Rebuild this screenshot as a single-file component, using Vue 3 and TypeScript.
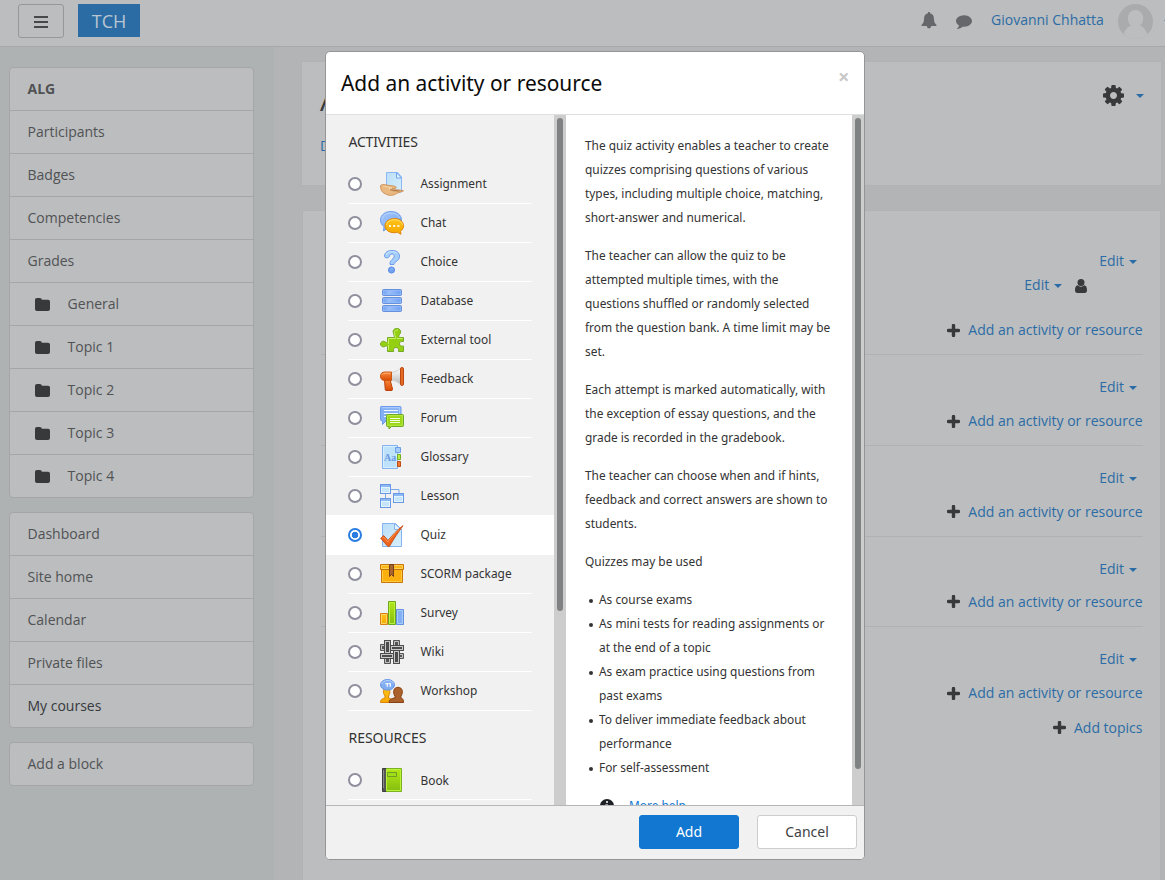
<script setup lang="ts">
import { ref } from 'vue'

interface NavItem { label: string; bold?: boolean; dark?: boolean; folder?: boolean }
interface Option { id: string; label: string }

const navBlocks: NavItem[][] = [
  [
    { label: 'ALG', bold: true },
    { label: 'Participants' },
    { label: 'Badges' },
    { label: 'Competencies' },
    { label: 'Grades' },
    { label: 'General', folder: true },
    { label: 'Topic 1', folder: true },
    { label: 'Topic 2', folder: true },
    { label: 'Topic 3', folder: true },
    { label: 'Topic 4', folder: true },
  ],
  [
    { label: 'Dashboard' },
    { label: 'Site home' },
    { label: 'Calendar' },
    { label: 'Private files' },
    { label: 'My courses', dark: true },
  ],
  [{ label: 'Add a block' }],
]

const activities: Option[] = [
  { id: 'assign', label: 'Assignment' },
  { id: 'chat', label: 'Chat' },
  { id: 'choice', label: 'Choice' },
  { id: 'data', label: 'Database' },
  { id: 'lti', label: 'External tool' },
  { id: 'feedback', label: 'Feedback' },
  { id: 'forum', label: 'Forum' },
  { id: 'glossary', label: 'Glossary' },
  { id: 'lesson', label: 'Lesson' },
  { id: 'quiz', label: 'Quiz' },
  { id: 'scorm', label: 'SCORM package' },
  { id: 'survey', label: 'Survey' },
  { id: 'wiki', label: 'Wiki' },
  { id: 'workshop', label: 'Workshop' },
]
const resources: Option[] = [{ id: 'book', label: 'Book' }]
const groups = [
  { title: 'ACTIVITIES', items: activities },
  { title: 'RESOURCES', items: resources },
]

const selected = ref('quiz')
const sections = [1, 2, 3, 4, 5]

const paragraphs: string[][] = [
  ['The quiz activity enables a teacher to create', 'quizzes comprising questions of various', 'types, including multiple choice, matching,', 'short-answer and numerical.'],
  ['The teacher can allow the quiz to be', 'attempted multiple times, with the', 'questions shuffled or randomly selected', 'from the question bank. A time limit may be', 'set.'],
  ['Each attempt is marked automatically, with', 'the exception of essay questions, and the', 'grade is recorded in the gradebook.'],
  ['The teacher can choose when and if hints,', 'feedback and correct answers are shown to', 'students.'],
  ['Quizzes may be used'],
]
const uses: string[][] = [
  ['As course exams'],
  ['As mini tests for reading assignments or', 'at the end of a topic'],
  ['As exam practice using questions from', 'past exams'],
  ['To deliver immediate feedback about', 'performance'],
  ['For self-assessment'],
]
</script>

<template>
  <div class="page">
    <header class="topbar">
      <button class="menu-btn" aria-label="Menu">
        <svg width="14" height="12" viewBox="0 0 14 12"><path d="M0 1h14M0 6h14M0 11h14" stroke="#46484a" stroke-width="2" /></svg>
      </button>
      <span class="brand">TCH</span>
      <div class="user-tools">
        <svg class="bell" width="16" height="17" viewBox="0 0 16 17"><path fill="#65676a" d="M8 0c.8 0 1.200.5 1.100 1.300 2.500.6 3.800 2.500 3.800 5 0 3.600 1 5.300 2.500 6.500.4.600.1 1.200-.5 1.200h-4.800c0 1.400-.9 2.300-2.100 2.300s-2.100-.9-2.100-2.300H1.100c-.6 0-.9-.6-.5-1.200C2.100 11.600 3.100 9.900 3.100 6.300c0-2.500 1.300-4.400 3.800-5C6.800.5 7.200 0 8 0z" /></svg>
        <svg class="bubble" width="16" height="16" viewBox="0 0 1792 1792"><path fill="#65676a" d="M1792 896q0 174-120 321.500t-326 233-450 85.500q-70 0-145-8-198 175-460 242-49 14-114 22-17 2-30.500-9t-17.500-29v-1q-3-4-.5-12t2-10 4.500-9.500l6-9 7-8.500 8-9q7-8 31-34.500t34.500-38 31-39.500 32.500-51 27-59 26-76q-157-89-247.500-220t-90.500-281q0-130 71-248.500t191-204.500 286-136.500 348-50.500q244 0 450 85.500t326 233 120 321.500z" /></svg>
        <a class="user-name">Giovanni Chhatta</a>
        <svg class="avatar" width="35" height="35" viewBox="0 0 35 35">
          <clipPath id="avatarClip"><circle cx="17.500" cy="17.500" r="17.500" /></clipPath>
          <g clip-path="url(#avatarClip)">
            <rect width="35" height="35" fill="#a9abad" />
            <ellipse cx="17.500" cy="14.500" rx="7.800" ry="8.500" fill="#bbbdbf" />
            <path d="M5 35c0-8 5-13 9-14h7c4 1 9 6 9 14z" fill="#bbbdbf" />
          </g>
        </svg>
        <i class="caret"></i>
      </div>
    </header>

    <div class="columns">
      <aside class="drawer">
        <nav v-for="(block, b) in navBlocks" :key="b" class="nav-block">
          <a v-for="item in block" :key="item.label" class="nav-item" :class="{ bold: item.bold, dark: item.dark, sub: item.folder }">
            <svg v-if="item.folder" class="folder" width="15" height="13" viewBox="0 0 15 13"><path fill="#37393b" d="M2 0h2.800C6 0 6.800.8 6.800 1.800h6.200c1.200 0 2 .8 2 2V11c0 1.200-.8 2-2 2H2c-1.200 0-2-.8-2-2V2C0 .8.800 0 2 0z" /></svg>
            <span>{{ item.label }}</span>
          </a>
        </nav>
      </aside>

      <main class="content">
        <section class="card heading-card">
          <div>
            <h1>ALG</h1>
            <a class="crumb">Dashboard</a>
          </div>
          <div class="settings">
            <svg width="21" height="21" viewBox="0 0 1536 1536"><path fill="#37393b" d="M1024 768q0-106-75-181t-181-75-181 75-75 181 75 181 181 75 181-75 75-181zm512-109v222q0 12-8 23t-20 13l-185 28q-19 54-39 91 35 50 107 138 10 12 10 25t-9 23q-27 37-99 108t-94 71q-12 0-26-9l-138-108q-44 23-91 38-16 136-29 186-7 28-36 28h-222q-14 0-24.500-8.500t-11.500-21.500l-28-184q-49-16-90-37l-141 107q-10 9-25 9-14 0-25-11-126-114-165-168-7-10-7-23 0-12 8-23 15-21 51-66.500t54-70.500q-27-50-41-99l-183-27q-13-2-21-12.500t-8-23.500v-222q0-12 8-23t19-13l186-28q14-46 39-92-40-57-107-138-10-12-10-24 0-10 9-23 26-36 98.500-107.500t94.500-71.500q13 0 26 10l138 107q44-23 91-38 16-136 29-186 7-28 36-28h222q14 0 24.500 8.500t11.500 21.500l28 184q49 16 90 37l142-107q9-9 24-9 13 0 25 10 129 119 165 170 7 8 7 22 0 12-8 23-15 21-51 66.500t-54 70.500q26 50 41 98l183 28q13 2 21 12.500t8 23.500z" /></svg>
            <i class="caret"></i>
          </div>
        </section>

        <section class="card topics">
          <div v-for="n in sections" :key="n" class="topic" :class="{ first: n === 1, tight: n === 4, last: n === 5 }">
            <div class="edit"><a>Edit</a><i class="caret"></i></div>
            <div v-if="n === 1" class="edit inner">
              <a>Edit</a><i class="caret"></i>
              <svg class="person" width="12" height="14" viewBox="0 0 12 14"><circle cx="6" cy="3.500" r="3.500" fill="#37393b" /><path fill="#37393b" d="M2.700 6.300C3.600 7.200 4.700 7.700 6 7.700s2.400-.5 3.300-1.400C11.200 6.600 12 8.600 12 11.300 12 13 11 14 9.800 14H2.200C1 14 0 13 0 11.300 0 8.600.8 6.600 2.700 6.300z" /></svg>
            </div>
            <div class="add">
              <svg width="13" height="13" viewBox="0 0 13 13"><path d="M6.500 1.500v10M1.500 6.500h10" stroke="#37393b" stroke-width="3.400" stroke-linecap="round" /></svg>
              <a>Add an activity or resource</a>
            </div>
          </div>
          <div class="add topics-add">
            <svg width="13" height="13" viewBox="0 0 13 13"><path d="M6.500 1.500v10M1.500 6.500h10" stroke="#37393b" stroke-width="3.400" stroke-linecap="round" /></svg>
            <a>Add topics</a>
          </div>
        </section>
      </main>
    </div>

    <div class="dialog" role="dialog">
      <div class="dialog-head">
        <h2>Add an activity or resource</h2>
        <span class="close">×</span>
      </div>
      <div class="dialog-body">
        <div class="chooser">
          <div v-for="g in groups" :key="g.title" class="group">
            <h3>{{ g.title }}</h3>
            <div v-for="o in g.items" :key="o.id" class="option" :class="{ selected: selected === o.id }" @click="selected = o.id">
              <div class="option-inner">
                <span class="radio"></span>
                <svg class="icon" width="24" height="24" viewBox="0 0 24 24">
                  <defs v-if="o.id === 'assign'">
                    <linearGradient id="gOrange" x1="0" y1="0" x2="0" y2="1"><stop offset="0" stop-color="#ffc31a" /><stop offset="1" stop-color="#f5a800" /></linearGradient>
                    <linearGradient id="gGreen" x1="0" y1="0" x2="0" y2="1"><stop offset="0" stop-color="#b4e916" /><stop offset="1" stop-color="#84bd10" /></linearGradient>
                    <linearGradient id="gBlue" x1="0" y1="0" x2="1" y2="1"><stop offset="0" stop-color="#a9cafa" /><stop offset="1" stop-color="#6b9ff0" /></linearGradient>
                    <linearGradient id="gDisk" x1="0" y1="0" x2="1" y2="0"><stop offset="0" stop-color="#6f9ff0" /><stop offset=".35" stop-color="#98bffa" /><stop offset="1" stop-color="#6f9ff0" /></linearGradient>
                    <linearGradient id="gPage" x1="0" y1="0" x2="1" y2="1"><stop offset="0" stop-color="#b9def8" /><stop offset="1" stop-color="#d8effc" /></linearGradient>
                    <linearGradient id="gRed" x1="0" y1="0" x2="0" y2="1"><stop offset="0" stop-color="#fb8b3c" /><stop offset="1" stop-color="#d84a05" /></linearGradient>
                    <linearGradient id="gHorn" x1="0" y1="0" x2="0" y2="1"><stop offset="0" stop-color="#fff" /><stop offset="1" stop-color="#b8b8b8" /></linearGradient>
                  </defs>
                  <template v-if="o.id === 'assign'">
                    <path d="M6.500.5h11l4 4.500v15h-15z" fill="url(#gPage)" stroke="#8bb8f5" />
                    <path d="M16.500.5V6h5z" fill="#e5f4ff" stroke="#6fa4ef" />
                    <path d="M.5 13.500c1.500-1 3-1.300 5-.7l4 .7 5 .7c2 .2 2.300 2 .5 2.300l-4 .1 2.500 1.100 5.500.2 4.500.9c-2.500 1.300-5 1.700-7 2.700-2.500 2-7 2.500-10 1L3 20.500C1.500 19 .5 17 .5 13.500z" fill="#e9b981" stroke="#c98747" stroke-width=".8" />
                    <path d="M3 14l9 2-3 .8 4 1.600" fill="none" stroke="#f8d7ac" stroke-width=".8" />
                    <path d="M10 17.500l3.500 1.200 6 .3" fill="none" stroke="#965a2e" stroke-width=".8" />
                  </template>
                  <template v-else-if="o.id === 'chat'">
                    <path d="M4 15.500C1.500 14 .5 11.500.5 9 .5 4 5 .5 11 .5S21.500 4 21.500 9 17 17 11 17c-2 0-3.500 0-4 .5L3.500 20z" fill="url(#gBlue)" stroke="#719fe8" />
                    <path d="M2 8c1-4 5-6 9-6s7.500 2 8.500 5" fill="none" stroke="#b9d3ff" />
                    <path d="M14.500 7.500c5 0 9 3 9 7.200 0 2.600-1.300 4.300-3 5.600l.5 3-3.500-2c-6 1.500-12.500-1.300-12.500-6.600 0-4.200 4.500-7.200 9.500-7.200z" fill="url(#gOrange)" stroke="#e0850a" />
                    <path d="M6.500 14c0-3 4-5.300 8-5.300s7.800 2.300 7.800 5.300" fill="none" stroke="#ffe278" stroke-width=".9" />
                    <path d="M9 14h2v2H9zM13.200 14h2v2h-2zM17.400 14h2v2h-2z" fill="#fff7df" />
                  </template>
                  <template v-else-if="o.id === 'choice'">
                    <path d="M4.500 6C4.600 2.300 8 .5 12 .5c4.300 0 7.500 2 7.500 5.700 0 5.300-5.500 5.100-5.500 8.300h-4c-.5-5 4.200-5.200 4.200-8.400 0-3-4.400-2.600-4.700 0-.2 2.300-5.200 2.500-5-.1z" fill="#a4cdf9" stroke="#6b9ced" />
                    <path d="M6 5c1-4 8-4 10.500-2" fill="none" stroke="#d3e9ff" />
                    <circle cx="11.500" cy="20" r="3.100" fill="#72a0f0" stroke="#6090e4" /><path d="M10 19h3" stroke="#8ab7f8" />
                  </template>
                  <template v-else-if="o.id === 'data'">
                    <g v-for="y in [0, 8, 16]" :key="y">
                      <rect x="2.500" :y="y + 0.500" width="19" height="6" rx="1" fill="url(#gDisk)" stroke="#6590dc" />
                      <rect x="3.500" :y="y + 1.500" width="17" height="4" fill="none" stroke="#92b9fa" stroke-width=".8" />
                    </g>
                  </template>
                  <template v-else-if="o.id === 'lti'">
                    <path d="M7.500 9.500h6.700c.7-1.500-.6-2-.7-4.200A3.200 3.200 0 0 1 17 .6a3.200 3.200 0 0 1 3.200 4.800c-.8 1.300-2 2.500-1 4.100h4.300v4c-2.500-.5-4 .5-4 2.300s1.500 2.800 4 2.200v5.500h-5c.5-2.500-.5-4-2.500-4s-3 1.500-2.300 4H7.500v-5c-1.500-1.200-2 0-3.500.3A2.900 2.900 0 0 1 .5 16c.2-2.500 3.200-3.600 5-2 1 1 1.500.5 2-.5z" fill="#95cf12" stroke="#75aa28" />
                    <path d="M8.500 16v-5.500h7c1-2-1.500-3-1-6 .5-2 2-2.800 3.500-2.400M8.500 22v-5M17 10.500h5.500" fill="none" stroke="#c7f15e" />
                  </template>
                  <template v-else-if="o.id === 'feedback'">
                    <path d="M4.500 13l.8 10 .7.500h6l.5-1.500-2.500-9.500z" fill="url(#gRed)" stroke="#bd4108" />
                    <path d="M11 5.500C15 5 18 4 20.500 1.500v16C17.500 14.500 14 13.600 11 13z" fill="url(#gHorn)" stroke="#d2d2d2" />
                    <path d="M11.500 5H5C2 5 .5 6.500.5 9.200S2 13.500 5 13.500h6.500z" fill="url(#gRed)" stroke="#cc5813" /><path d="M2 8c.5-1.500 2-1.800 8.500-1.800" fill="none" stroke="#ffb07a" />
                    <rect x="20.500" y=".5" width="3" height="18" rx="1.400" fill="#e76a22" stroke="#bb4813" />
                  </template>
                  <template v-else-if="o.id === 'forum'">
                    <path d="M1 .5h19q1 0 1 1v12q0 1-1 1H6.500l-4 4v-4H1q-.500 0-.5-1v-12q0-1 .5-1z" fill="#84aff2" stroke="#6a9aec" /><path d="M1.700 1.700h18v11" fill="none" stroke="#b1d1ff" />
                    <path d="M4 4.500h14M4 7.500h14M4 10.500h5" stroke="#eef6ff" />
                    <path d="M7.500 8.500h15q1 0 1 1v10q0 1-1 1h-11l-2.500 2.500v-2.500H7.500q-1 0-1-1v-10q0-1 1-1z" fill="#99d516" stroke="#6fa62c" /><path d="M7.700 9.700h14.600v9.600H7.700z" fill="none" stroke="#b8ed45" />
                    <path d="M10 12.500h10M10 14.500h10M10 16.500h10" stroke="#f4ffe0" />
                  </template>
                  <template v-else-if="o.id === 'glossary'">
                    <path d="M2.500.5h15v23h-15z" fill="#bde2fa" stroke="#84b3f2" /><path d="M3.500 1.500h12.800v21H3.500z" fill="none" stroke="#d6eefd" />
                    <path d="M15.500 2.500h5v5h-5z" fill="#a6ccfa" stroke="#6d9fe9" /><path d="M17.500 9.500h3v5h-3z" fill="#bdec4a" stroke="#75ad20" /><path d="M17.500 16.500h3v5h-3z" fill="#f07a35" stroke="#bf4c13" />
                    <text x="4" y="16" class="aa">Aa</text>
                  </template>
                  <template v-else-if="o.id === 'lesson'">
                    <path d="M11 5.500h8V10M5.500 9v6" fill="none" stroke="#7ca7e8" />
                    <g v-for="p in [[0, 0], [13, 9], [0, 14]]" :key="p.join()">
                      <rect :x="p[0] + 0.5" :y="p[1] + 0.5" width="10" height="9" fill="#c5e5fb" stroke="#6897e3" />
                      <path :d="`M${p[0] + 1} ${p[1] + 2}h9`" stroke="#78a8f3" stroke-width="1.500" />
                      <rect :x="p[0] + 1.5" :y="p[1] + 3.500" width="8" height="5" fill="none" stroke="#e3f4ff" />
                    </g>
                  </template>
                  <template v-else-if="o.id === 'quiz'">
                    <path d="M2.500.5h13l6 6v17h-19z" fill="url(#gPage)" stroke="#86b4f3" /><path d="M14.500.5v6h7z" fill="#e3f3ff" stroke="#86b4f3" />
                    <path d="M.7 15.200l3-2.600 4.300 4.900C12.500 12 17 7 23 2.700 18 9.500 13.500 16 9.500 23.300H7.700z" fill="#ed6420" stroke="#c54a10" stroke-width=".9" /><path d="M2.500 15l1-1 4.300 5C12 13.500 15 10 19 6.500" fill="none" stroke="#ffa25f" stroke-width=".8" />
                  </template>
                  <template v-else-if="o.id === 'scorm'">
                    <path d="M1.500 7.500h21v13h-21z" fill="#fbb010" stroke="#ca740d" /><path d="M2.500 9v10.500h19V9" fill="none" stroke="#ffca3c" />
                    <path d="M.5 2.500h23v5H.5z" fill="#fbb717" stroke="#c8720c" /><path d="M1.500 3.500h21v3h-21z" fill="none" stroke="#ffd455" />
                    <path d="M9.500 2.500h4v12l-2-2-2 2z" fill="#a96530" stroke="#75401a" />
                  </template>
                  <template v-else-if="o.id === 'survey'">
                    <path d="M.5 12.500h7v11h-7z" fill="url(#gOrange)" stroke="#d58016" /><path d="M1.500 13.500h5v9h-5z" fill="none" stroke="#ffd660" />
                    <path d="M16.500 8.500h7v15h-7z" fill="#83aff4" stroke="#6391dd" /><path d="M17.500 9.500h5v13h-5z" fill="none" stroke="#a8cbfc" />
                    <path d="M8.500.5h7v23h-7z" fill="url(#gGreen)" stroke="#6ca61d" /><path d="M9.500 1.500h5v21h-5z" fill="none" stroke="#bdf044" />
                  </template>
                  <template v-else-if="o.id === 'wiki'">
                    <path d="M.5 4.500h4v6h-4zM19.500 13.500h4v5h-4zM13.500.5h6v5h-6zM4.500 18.500h6v5h-6z" fill="#777" stroke="#555" />
                    <path d="M1.500 5.500h3v4h-3zM19.500 14.500h3v3h-3zM14.500 1.500h4v4h-4zM5.500 18.500h4v4h-4z" fill="#555" stroke="#c4c4c4" />
                    <g v-for="r in [[4, 0, 7, 14], [13, 10, 7, 14], [10, 5, 14, 6], [0, 13, 14, 6]]" :key="r.join()">
                      <rect :x="r[0] + 0.5" :y="r[1] + 0.5" :width="r[2] - 1" :height="r[3] - 1" fill="#4c4c4c" stroke="#4c4c4c" />
                      <rect :x="r[0] + 1.5" :y="r[1] + 1.5" :width="r[2] - 3" :height="r[3] - 3" fill="#4c4c4c" stroke="#c8c8c8" />
                    </g>
                  </template>
                  <template v-else-if="o.id === 'workshop'">
                    <path d="M.5 23.500c0-2.500.7-3.500 4.500-4.500v-2C2.500 14 3 8 6.500 8s4.500 6 2 9v2c3 .5 4 2 4 4.500z" fill="url(#gOrange)" stroke="#db850b" />
                    <path d="M9 23.500c0-2.500 1.700-3.800 6-4.700v-1.500c-2.500-4-1.600-9 3-9s5.500 5 3 9v1.500c2 .9 2.500 2.200 2.500 4.700z" fill="#aa612b" stroke="#884212" />
                    <ellipse cx="7.500" cy="5.800" rx="7" ry="5.300" fill="#81adf3" stroke="#6493e4" /><path d="M1.800 5c1-4 10-5 11.500-.5" fill="none" stroke="#b7d3ff" />
                    <path d="M5.300 4.700h2v3M8.300 4.700h2v3" fill="none" stroke="#f4f8ff" stroke-width="1.300" />
                  </template>
                  <template v-else>
                    <path d="M2.500.5h4v23h-4z" fill="#555" stroke="#3c3c3c" /><path d="M3.500 2v18" stroke="#8a8a8a" />
                    <path d="M6.500.5h15v23h-15z" fill="url(#gGreen)" stroke="#79b322" /><path d="M6.500 1.500h14v21h-14z" fill="none" stroke="#bcf23a" />
                    <path d="M7.500 4.500h9v4h-9z" fill="#9fdc19" stroke="#6b9f1d" />
                  </template>
                </svg>
                <span class="option-label">{{ o.label }}</span>
              </div>
            </div>
          </div>
        </div>
        <div class="scroll"><i class="thumb thumb-left"></i></div>
        <div class="help">
          <p v-for="(p, i) in paragraphs" :key="i"><span v-for="line in p" :key="line">{{ line }}</span></p>
          <ul><li v-for="(u, i) in uses" :key="i"><span v-for="line in u" :key="line">{{ line }}</span></li></ul>
          <div class="more">
            <svg width="14" height="14" viewBox="0 0 14 14"><circle cx="7" cy="7" r="7" fill="#1d2125" /><path d="M6 2.200h2v1.600H6zM5.200 5.500H8v4.300h1v1.400H5.200V9.800H6V7h-.8z" fill="#fff" /></svg>
            <a>More help</a>
          </div>
        </div>
        <div class="scroll"><i class="thumb thumb-right"></i></div>
      </div>
      <div class="dialog-foot">
        <button class="btn primary">Add</button>
        <button class="btn">Cancel</button>
      </div>
    </div>
  </div>
</template>

<style>
body { margin: 0; overflow: hidden; }
</style>

<style scoped>
* { box-sizing: border-box; }
.page { position: relative; width: 1165px; height: 880px; overflow: hidden; background: #b3b4b6; font: 14px/20px "Open Sans", sans-serif; color: #515254; }
a { color: #2c6ca5; }
button { font-family: inherit; padding: 0; }
.caret { display: block; width: 0; height: 0; border: 4px solid transparent; border-top-color: #2c6ca5; border-bottom: 0; }
.topbar { display: flex; align-items: flex-start; height: 47px; padding: 4px 0 0 18px; background: #bbbdbf; border-bottom: 1px solid #a6a8aa; }
.menu-btn { display: flex; align-items: center; justify-content: center; width: 46px; height: 34px; padding-top: 2px; background: none; border: 1px solid #95979a; border-radius: 3px; }
.brand { width: 62px; height: 33px; margin-left: 14px; background: #2c6ca5; color: #b9c6d1; font-size: 18px; line-height: 34px; text-align: center; }
.user-tools { display: flex; align-items: flex-start; margin-left: auto; width: 244px; flex: none; }
.user-tools > * { flex: none; }
.bell { margin-top: 8px; }
.bubble { margin: 9px 0 0 19px; }
.user-name { margin: 6px 0 0 19px; width: 113px; white-space: nowrap; }
.avatar { margin-left: 14px; }
.user-tools .caret { margin: 16px 0 0 11px; }
.columns { display: flex; height: 833px; }
.drawer { display: flex; flex-direction: column; gap: 14px; width: 274px; padding: 20px 20px 0 9px; background: #aeb2b3; }
.nav-block { border: 1px solid #a4a6a8; border-radius: 4px; background: #bbbdbf; }
.nav-item { display: flex; align-items: center; height: 43px; padding-left: 17.500px; border-bottom: 1px solid #a4a6a8; color: #515254; }
.nav-item:last-child { border-bottom: 0; height: 42px; }
.nav-item.bold { font-weight: 700; }
.nav-item.dark { color: #37393b; }
.nav-item.sub { padding-left: 25px; gap: 17.600px; }
.folder { margin-top: 1px; }
.content { flex: 1; padding: 14px 3px 0 27px; }
.card { background: #bbbdbf; border: 1px solid #b0b2b4; }
.heading-card { display: flex; justify-content: space-between; height: 125px; padding: 18px 17px 0 18px; }
h1 { margin: 0; color: #37393b; font-size: 30px; line-height: 40px; font-weight: 400; }
.crumb { display: block; margin-top: 16px; }
.settings { display: flex; align-items: center; gap: 12px; height: 31px; }
.topics { height: 700px; margin: 24px 1px 0 1px; padding: 0 17.500px 0 18px; }
.topic { display: flex; flex-direction: column; align-items: flex-end; height: 90.800px; padding-top: 22px; border-bottom: 1px solid #afb1b3; }
.topic.first { height: 144px; padding-top: 40px; }
.topic.tight .add { margin-top: 13.300px; }
.topic.last { border: 0; height: 90.600px; }
.edit { display: flex; align-items: center; height: 20px; margin-right: 5.500px; gap: 5px; }
.edit .caret { margin-top: 2px; }
.edit.inner { height: 20px; margin: 4px 55.300px 11px 0; }
.person { margin-left: 8px; margin-top: 2px; }
.add { display: flex; align-items: center; gap: 8px; height: 20px; margin-top: 14px; }
.topics-add { justify-content: flex-end; margin-top: 0; }

.dialog { position: absolute; left: 325px; top: 51px; width: 540px; height: 809px; display: flex; flex-direction: column; overflow: hidden; border: 1px solid #939597; border-radius: 5px; background: #fff; font-family: "Noto Sans", sans-serif; color: #333; }
.dialog-head { display: flex; justify-content: space-between; height: 63px; padding: 0 14.500px 0 15px; border-bottom: 1px solid #dedfe0; }
h2 { margin: 0; font-size: 20.920px; line-height: 62px; font-weight: 400; color: #0b0b0b; }
.close { font-size: 20px; font-weight: 700; line-height: 49px; color: #c8c8c8; }
.dialog-body { display: flex; height: 690px; overflow: hidden; }
.chooser { width: 228px; height: 690px; overflow: hidden; background: #f1f1f1; }
h3 { margin: 0; padding: 16px 0 0 22.500px; height: 49px; font-size: 14px; line-height: 22px; font-weight: 400; letter-spacing: -.2px; }
.group + .group h3 { height: 50px; padding-top: 17px; letter-spacing: -.05px; }
.option { height: 39px; padding: 0 22px; }
.option-inner { display: flex; align-items: center; height: 40px; border-bottom: 1px solid #fff; }
.option.selected { position: relative; background: #fff; box-shadow: 0 1px #fff; }
.radio { width: 14px; height: 14px; border: 2px solid #8f8f9d; border-radius: 50%; background: #fff; }
.selected .radio { border-color: #2a7de1; background: radial-gradient(circle, #2a7de1 3px, #fff 3.600px); }
.icon { margin-left: 18px; }
.option-label { margin: -2px 0 0 16.500px; font-size: 11.900px; }
.group + .group .option-label { margin-top: 0; }
.aa { font: bold 10px "Liberation Serif", serif; fill: #6b9ae5; }
.scroll { flex: none; width: 12px; background: #cdcdcd; padding: 3px; }
.thumb { display: block; width: 6px; border-radius: 3px; background: #7f8282; }
.thumb-left { height: 493px; }
.thumb-right { height: 651px; }
.help { width: 286px; padding: 18px 0 0 19px; font-size: 11.900px; line-height: 24px; white-space: nowrap; overflow: hidden; }
.help p { margin: 0 0 14px; }
.help span { display: block; }
.help ul { margin: 0 0 14px; padding: 0 0 0 14px; list-style: none; }
.help li { position: relative; }
.help li::before { content: ""; position: absolute; left: -10px; top: 12px; width: 4px; height: 4px; border-radius: 50%; background: #333; }
.more { display: flex; align-items: center; gap: 15px; padding-left: 15px; }
.more svg { margin-top: 2px; }
.more a { color: #1177d1; }
.dialog-foot { display: flex; justify-content: flex-end; gap: 18px; height: 54px; padding: 9px 7px 0 0; background: #f1f1f1; border-top: 1px solid #b4b6b8; }
.btn { width: 100px; height: 34px; padding-bottom: 2px; border: 1px solid #cbcdcf; border-radius: 3px; background: #fff; color: #404244; font-size: 14px; }
.btn.primary { border-color: #1177d1; background: #1177d1; color: #fff; }
</style>
